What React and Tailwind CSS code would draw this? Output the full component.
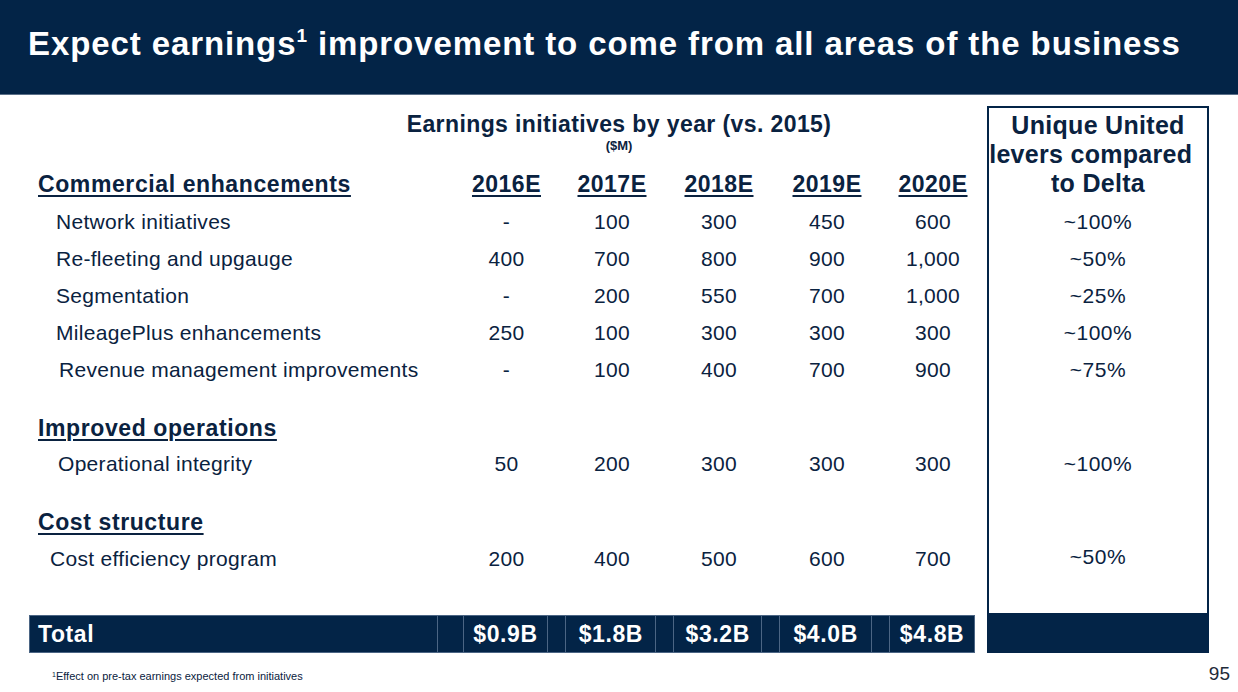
import React from "react";

const rows = [
  { label: "Network initiatives", pl: "pl-[27px]", v: ["-", "100", "300", "450", "600"], h: "h-[37px]" },
  { label: "Re-fleeting and upgauge", pl: "pl-[27px]", v: ["400", "700", "800", "900", "1,000"], h: "h-[37px]" },
  { label: "Segmentation", pl: "pl-[27px]", v: ["-", "200", "550", "700", "1,000"], h: "h-[37px]" },
  { label: "MileagePlus enhancements", pl: "pl-[27px]", v: ["250", "100", "300", "300", "300"], h: "h-[37px]" },
  { label: "Revenue management improvements", pl: "pl-[30px]", v: ["-", "100", "400", "700", "900"], h: "h-[37px]" },
];

function Cells({ values }) {
  return (
    <div className="flex items-center gap-[18px]">
      <div className="w-[85px] text-center">{values[0]}</div>
      <div className="w-[90px] text-center">{values[1]}</div>
      <div className="w-[88px] text-center">{values[2]}</div>
      <div className="w-[92px] text-center">{values[3]}</div>
      <div className="w-[84px] text-center">{values[4]}</div>
    </div>
  );
}

function DataRow({ label, pl, v, h }) {
  return (
    <div className={`flex items-center ${h} text-[21px] tracking-[0.3px]`}>
      <div className={`w-[435px] ${pl}`}>{label}</div>
      <Cells values={v} />
    </div>
  );
}

function Section({ children, h }) {
  return (
    <div className={`flex items-center ${h} pl-[9px]`}>
      <span className="text-[23px] font-bold tracking-[0.6px] underline decoration-2 underline-offset-[3px]">
        {children}
      </span>
    </div>
  );
}

export default function App() {
  return (
    <div className="relative w-[1238px] h-[692px] overflow-hidden bg-white font-['Liberation_Sans',Arial,sans-serif] text-[#0a2240]">
      <div className="h-[95px] bg-[#032447] border-b border-[#5a6f88] pl-[28px] pt-[26px]">
        <h1 className="text-[33px] leading-[36px] font-bold text-white tracking-[0.9px] whitespace-nowrap">
          Expect earnings<sup className="text-[19px] top-[-13px]">1</sup> improvement to come from all areas of the business
        </h1>
      </div>

      <div className="flex pl-[29px] pt-[11px]">
        <div className="w-[946px] flex flex-col">
          <div className="h-[60px] flex flex-col">
            <div className="ml-[340px] w-[500px] text-center text-[23px] font-bold leading-[26px] pt-[5px] tracking-[0.4px] whitespace-nowrap">
              Earnings initiatives by year (vs. 2015)
            </div>
            <div className="ml-[340px] w-[500px] text-center text-[13px] font-bold leading-[16px] mt-[1px]">
              ($M)
            </div>
          </div>

          <div className="flex items-center h-[37px]">
            <div className="w-[435px] pl-[9px]">
              <span className="text-[23px] font-bold tracking-[0.6px] underline decoration-2 underline-offset-[3px]">
                Commercial enhancements
              </span>
            </div>
            <div className="flex items-center gap-[18px] text-[23px] font-bold tracking-[0.5px]">
              {[
                ["2016E", "w-[85px]"],
                ["2017E", "w-[90px]"],
                ["2018E", "w-[88px]"],
                ["2019E", "w-[92px]"],
                ["2020E", "w-[84px]"],
              ].map(([y, w]) => (
                <div key={y} className={`${w} text-center`}>
                  <span className="underline decoration-2 underline-offset-[3px]">{y}</span>
                </div>
              ))}
            </div>
          </div>

          {rows.map((r) => (
            <DataRow key={r.label} {...r} />
          ))}

          <div className="h-[22px]" />
          <Section h="h-[36px]">Improved operations</Section>
          <DataRow label="Operational integrity" pl="pl-[29px]" v={["50", "200", "300", "300", "300"]} h="h-[36px]" />

          <div className="h-[22px]" />
          <Section h="h-[36px]">Cost structure</Section>
          <DataRow label="Cost efficiency program" pl="pl-[21px]" v={["200", "400", "500", "600", "700"]} h="h-[38px]" />

          <div className="h-[37px]" />
          <div className="flex h-[38px] bg-[#032447] text-white text-[23px] font-bold tracking-[0.6px] border border-[#4b6584]">
            <div className="w-[408px] flex items-center pl-[8px] border-r border-[#4b6584]">Total</div>
            <div className="w-[26px] border-r border-[#4b6584]" />
            {[
              ["$0.9B", "w-[85px]"],
              ["$1.8B", "w-[90px]"],
              ["$3.2B", "w-[88px]"],
              ["$4.0B", "w-[92px]"],
              ["$4.8B", "w-[84px]"],
            ].map(([t, w], i) => (
              <React.Fragment key={t}>
                <div className={`${w} flex items-center justify-center ${i < 4 ? "border-r border-[#4b6584]" : ""}`}>{t}</div>
                {i < 4 && <div className="w-[18px] border-r border-[#4b6584]" />}
              </React.Fragment>
            ))}
          </div>
        </div>

        <div className="ml-[12px] w-[222px] h-[547px] border-2 border-[#032447] flex flex-col">
          <div className="h-[95px] pt-[3px] text-center text-[25px] font-bold leading-[29px] tracking-[0.3px] whitespace-nowrap">
            Unique United
            <br />
            levers compared&nbsp;&nbsp;
            <br />
            to Delta
          </div>
          {["~100%", "~50%", "~25%", "~100%", "~75%"].map((t, i) => (
            <div key={i} className="h-[37px] flex items-center justify-center text-[21px] tracking-[0.5px]">{t}</div>
          ))}
          <div className="h-[58px]" />
          <div className="h-[36px] flex items-center justify-center text-[21px] tracking-[0.5px]">~100%</div>
          <div className="h-[58px]" />
          <div className="h-[34px] flex items-center justify-center text-[21px] tracking-[0.5px]">~50%</div>
          <div className="flex-1" />
          <div className="h-[38px] bg-[#032447]" />
        </div>
      </div>

      <div className="flex items-center justify-between h-[39px] pl-[52px] pr-[8px]">
        <div className="text-[11px] mt-[8px]">
          <sup className="text-[7px]">1</sup>Effect on pre-tax earnings expected from initiatives
        </div>
        <div className="text-[19px] text-[#1f2b3a] mt-[4px]">95</div>
      </div>
    </div>
  );
}
